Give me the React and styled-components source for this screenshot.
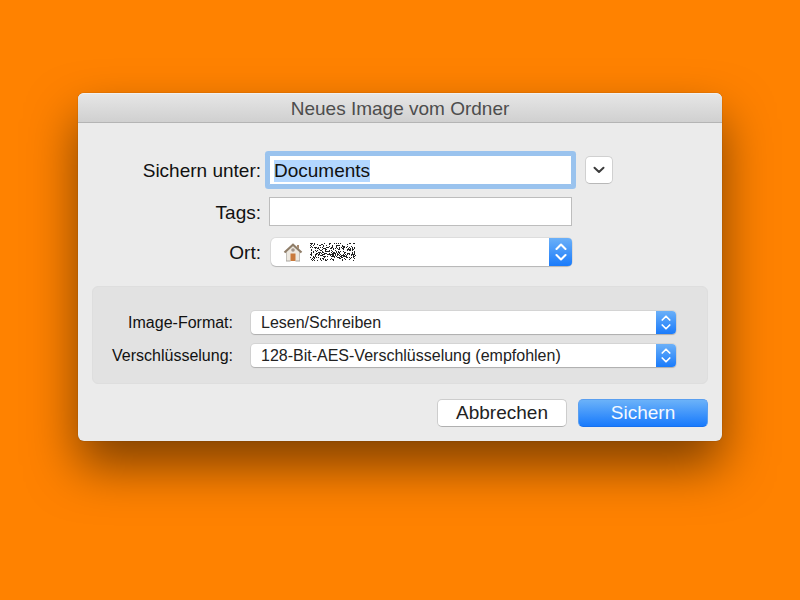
import React, { useEffect, useRef } from 'react'
import styled, { createGlobalStyle } from 'styled-components'

const GlobalStyle = createGlobalStyle`
    *,
    *::before,
    *::after {
        box-sizing: border-box;
    }

    body {
        margin: 0;
        background-color: #ff8200;
        font-family: 'Liberation Sans', Arial, sans-serif;
        color: #111;
    }
`

const DesktopStyled = styled.main`
    display: flex;
    justify-content: center;
    min-height: 100vh;
    padding: 93px 78px;
`

const DialogStyled = styled.section`
    width: 100%;
    max-width: 760px;
    align-self: flex-start;
    border-radius: 6px;
    background-color: #ebebeb;
    box-shadow:
        0 0 1px rgba(0, 0, 0, 0.5),
        0 25px 50px rgba(0, 0, 0, 0.5);
`

const TitleBarStyled = styled.header`
    display: flex;
    justify-content: center;
    align-items: center;
    height: 30px;
    padding-top: 1px;
    border-top: 1px solid #f0f0f0;
    border-bottom: 1px solid #b4b4b4;
    border-radius: 6px 6px 0 0;
    background: linear-gradient(#e6e6e6, #d0d0d0);
`

const TitleStyled = styled.h1`
    margin: 0;
    font-size: 19px;
    font-weight: 400;
    line-height: 24px;
    color: #4d4d4d;
`

const FormStyled = styled.form`
    padding: 32px 14px 14px;
`

const FileFieldsStyled = styled.div`
    display: grid;
    grid-template-columns: 169px minmax(0, 303px) 32px;
    column-gap: 8px;
    row-gap: 12px;
    align-items: center;
`

const LabelStyled = styled.label`
    grid-column: 1;
    padding-top: ${(props) => (props.$small ? '0' : '2px')};
    font-size: ${(props) => (props.$small ? '16px' : '19px')};
    line-height: ${(props) => (props.$small ? '23px' : '26px')};
    text-align: right;
    white-space: nowrap;
`

const TextInputStyled = styled.input`
    grid-column: 2;
    width: 100%;
    height: 29px;
    padding: 2px 4px 0;
    border: 1px solid #bdbdbd;
    border-radius: 0;
    background-color: #fff;
    font-family: inherit;
    font-size: 19px;
    color: #111;
    caret-color: transparent;
    outline: none;

    &:focus {
        height: 30px;
        border-color: #9ac3ee;
        border-radius: 1px;
        box-shadow: 0 0 0 4px #9ac3ee;
    }

    &::selection {
        background-color: #b3d7ff;
        color: #111;
    }
`

const ExpandButtonStyled = styled.button`
    display: flex;
    justify-content: center;
    align-items: center;
    width: 28px;
    height: 28px;
    margin-left: 5px;
    padding: 0;
    border: 1px solid #d0d0d0;
    border-bottom-color: #b8b8b8;
    border-radius: 5px;
    background-color: #fff;
`

const PopupStyled = styled.div`
    grid-column: 2;
    position: relative;
    display: flex;
    height: ${(props) => (props.$small ? '23px' : '28px')};
    margin-left: ${(props) => (props.$small ? '0' : '2px')};
    border-radius: ${(props) => (props.$small ? '4px' : '5px')};
    background-color: #fff;
    box-shadow:
        0 0 0 1px rgba(0, 0, 0, 0.06),
        0 1px 1px rgba(0, 0, 0, 0.18);
`

const SelectStyled = styled.select`
    flex: 1;
    min-width: 0;
    padding: 0 30px 0 10px;
    border: 0;
    background: transparent;
    appearance: none;
    outline: none;
    font-family: inherit;
    font-size: 16px;
    color: #222;
`

const StepperStyled = styled.span`
    position: absolute;
    top: 0;
    right: 0;
    bottom: 0;
    display: flex;
    justify-content: center;
    align-items: center;
    width: ${(props) => (props.$small ? '20px' : '23px')};
    border-radius: 0 4px 4px 0;
    background: linear-gradient(#6bb0f8, #1a7bfb);
    pointer-events: none;
`

const PlaceStyled = styled.span`
    position: absolute;
    top: 0;
    bottom: 0;
    left: 12px;
    display: flex;
    align-items: center;
    gap: 7px;
    pointer-events: none;
`

const OptionsStyled = styled.div`
    display: grid;
    grid-template-columns: 124px minmax(0, 1fr);
    column-gap: 18px;
    row-gap: 10px;
    margin-top: 20px;
    padding: 24px 31px 16px 16px;
    border: 1px solid #dedede;
    border-radius: 6px;
    background-color: #e2e2e2;
`

const ActionsStyled = styled.div`
    display: flex;
    justify-content: flex-end;
    gap: 11px;
    margin-top: 15px;
`

const ButtonStyled = styled.button`
    width: 130px;
    height: 28px;
    padding: 0;
    border: 1px solid ${(props) => (props.$primary ? '#5a9ff0' : '#cdcdcd')};
    border-bottom-color: ${(props) => (props.$primary ? '#1670ee' : '#b0b0b0')};
    border-radius: 5px;
    background: ${(props) =>
        props.$primary ? 'linear-gradient(#6bb2f9, #187afc)' : '#fff'};
    font-family: inherit;
    font-size: 19px;
    line-height: 24px;
    color: ${(props) => (props.$primary ? '#f4f9ff' : '#222')};
`

function Arrows({ small }) {
    return (
        <StepperStyled $small={small}>
            <svg
                width={small ? 10 : 12}
                height={small ? 15 : 18}
                viewBox="0 0 12 18"
                fill="none"
                stroke="#fff"
                strokeWidth="2.1"
                strokeLinecap="round"
                strokeLinejoin="round"
            >
                <path d="M1.5 6 6 1.5 10.5 6M1.5 12 6 16.5 10.5 12" />
            </svg>
        </StepperStyled>
    )
}

function House() {
    return (
        <svg width="20" height="20" viewBox="0 0 20 20">
            <path d="M3.5 9.5 10 4l6.5 5.5V19h-13z" fill="#eee9e0" />
            <path d="M3 10v9h1V10zM16 10v9h1v-9z" fill="#c3c0ba" />
            <path d="M14 3h2v4l-2-2z" fill="#a98a6e" />
            <path
                d="M1.5 10.5 10 2.8l8.500 7.700"
                fill="none"
                stroke="#8f7d68"
                strokeWidth="2.200"
            />
            <circle cx="10" cy="8" r="1.800" fill="#a3968c" />
            <path d="M7.500 11.500h5V19h-5z" fill="#c97a3c" />
            <path d="M3 18.500h4.500v1H3zM12.500 18.500H17v1h-4.500z" fill="#aaa6a0" />
        </svg>
    )
}

// Scrambled folder name, drawn from a fixed seed
function makeSpecks() {
    const specks = []
    let seed = 77
    for (let y = 0; y < 18; y++) {
        for (let x = 0; x < 46; x++) {
            seed = (seed * 16807) % 2147483647
            const edge = y < 4 || y > 14
            const level = edge ? 0.2 : 0.42
            if (seed / 2147483647 < level) {
                specks.push(`M${x} ${y}h1v1h-1z`)
            }
        }
    }
    return specks.join('')
}

const specks = makeSpecks()

function ScrambledName() {
    return (
        <svg width="46" height="18" viewBox="0 0 46 18">
            <path d={specks} fill="#222" shapeRendering="crispEdges" />
        </svg>
    )
}

function App() {
    const nameRef = useRef(null)

    useEffect(() => {
        nameRef.current.focus()
        nameRef.current.select()
    }, [])

    return (
        <>
            <GlobalStyle />
            <DesktopStyled>
                <DialogStyled role="dialog" aria-labelledby="title">
                    <TitleBarStyled>
                        <TitleStyled id="title">
                            Neues Image vom Ordner
                        </TitleStyled>
                    </TitleBarStyled>
                    <FormStyled onSubmit={(e) => e.preventDefault()}>
                        <FileFieldsStyled>
                            <LabelStyled id="name-label" htmlFor="name">
                                Sichern unter:
                            </LabelStyled>
                            <TextInputStyled
                                id="name"
                                ref={nameRef}
                                type="text"
                                defaultValue="Documents"
                                spellCheck={false}
                            />
                            <ExpandButtonStyled
                                type="button"
                                aria-labelledby="name-label"
                                aria-expanded="false"
                            >
                                <svg
                                    width="12"
                                    height="8"
                                    viewBox="0 0 12 8"
                                    fill="none"
                                    stroke="#3c3c3c"
                                    strokeWidth="2"
                                    strokeLinecap="round"
                                    strokeLinejoin="round"
                                >
                                    <path d="M1.5 1.8 6 6l4.5-4.2" />
                                </svg>
                            </ExpandButtonStyled>
                            <LabelStyled htmlFor="tags">Tags:</LabelStyled>
                            <TextInputStyled id="tags" type="text" />
                            <LabelStyled htmlFor="place">Ort:</LabelStyled>
                            <PopupStyled>
                                <SelectStyled id="place">
                                    <option value="home" />
                                </SelectStyled>
                                <PlaceStyled>
                                    <House />
                                    <ScrambledName />
                                </PlaceStyled>
                                <Arrows />
                            </PopupStyled>
                        </FileFieldsStyled>
                        <OptionsStyled>
                            <LabelStyled $small htmlFor="format">
                                Image-Format:
                            </LabelStyled>
                            <PopupStyled $small>
                                <SelectStyled id="format">
                                    <option>Lesen/Schreiben</option>
                                </SelectStyled>
                                <Arrows small />
                            </PopupStyled>
                            <LabelStyled $small htmlFor="encryption">
                                Verschlüsselung:
                            </LabelStyled>
                            <PopupStyled $small>
                                <SelectStyled id="encryption">
                                    <option>
                                        128-Bit-AES-Verschlüsselung (empfohlen)
                                    </option>
                                </SelectStyled>
                                <Arrows small />
                            </PopupStyled>
                        </OptionsStyled>
                        <ActionsStyled>
                            <ButtonStyled type="button">Abbrechen</ButtonStyled>
                            <ButtonStyled type="submit" $primary>
                                Sichern
                            </ButtonStyled>
                        </ActionsStyled>
                    </FormStyled>
                </DialogStyled>
            </DesktopStyled>
        </>
    )
}

export default App
